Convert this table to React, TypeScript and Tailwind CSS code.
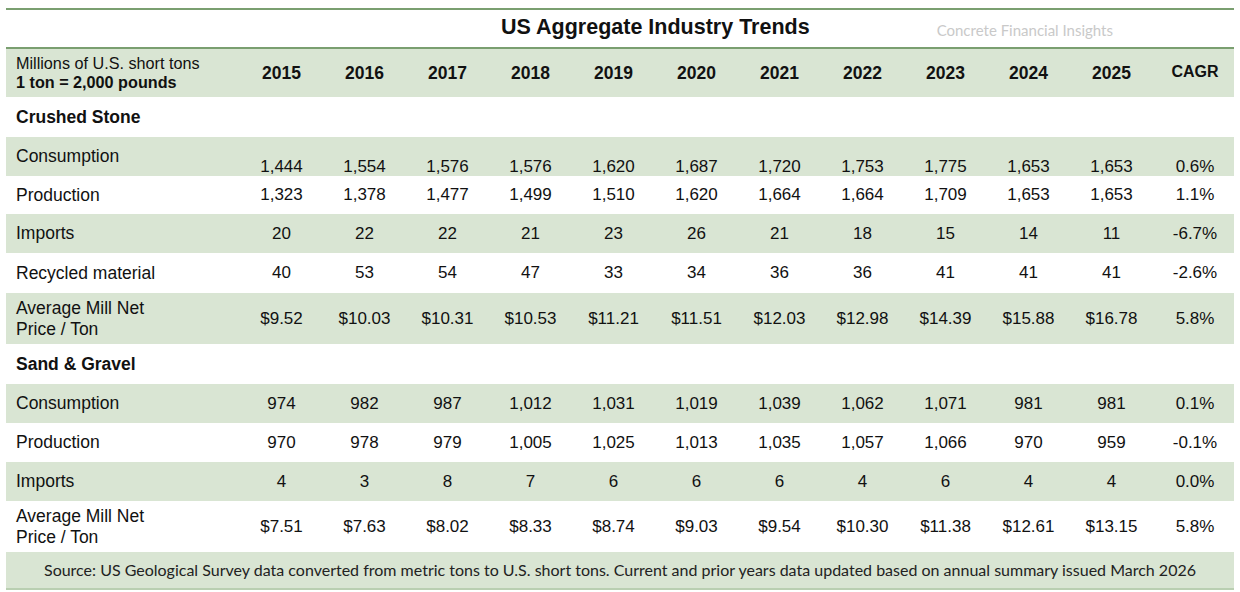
const years = ["2015", "2016", "2017", "2018", "2019", "2020", "2021", "2022", "2023", "2024", "2025"];

type Row = {
  label: string[];
  values: string[];
  green: boolean;
  h: string;
  offset?: boolean;
};

const crushed: Row[] = [
  { label: ["Consumption"], values: ["1,444", "1,554", "1,576", "1,576", "1,620", "1,687", "1,720", "1,753", "1,775", "1,653", "1,653", "0.6%"], green: true, h: "h-[39px]", offset: true },
  { label: ["Production"], values: ["1,323", "1,378", "1,477", "1,499", "1,510", "1,620", "1,664", "1,664", "1,709", "1,653", "1,653", "1.1%"], green: false, h: "h-[38px]" },
  { label: ["Imports"], values: ["20", "22", "22", "21", "23", "26", "21", "18", "15", "14", "11", "-6.7%"], green: true, h: "h-[39px]" },
  { label: ["Recycled material"], values: ["40", "53", "54", "47", "33", "34", "36", "36", "41", "41", "41", "-2.6%"], green: false, h: "h-[40px]" },
  { label: ["Average Mill Net", "Price / Ton"], values: ["$9.52", "$10.03", "$10.31", "$10.53", "$11.21", "$11.51", "$12.03", "$12.98", "$14.39", "$15.88", "$16.78", "5.8%"], green: true, h: "h-[51px]" },
];

const sand: Row[] = [
  { label: ["Consumption"], values: ["974", "982", "987", "1,012", "1,031", "1,019", "1,039", "1,062", "1,071", "981", "981", "0.1%"], green: true, h: "h-[39px]" },
  { label: ["Production"], values: ["970", "978", "979", "1,005", "1,025", "1,013", "1,035", "1,057", "1,066", "970", "959", "-0.1%"], green: false, h: "h-[39px]" },
  { label: ["Imports"], values: ["4", "3", "8", "7", "6", "6", "6", "4", "6", "4", "4", "0.0%"], green: true, h: "h-[39px]" },
  { label: ["Average Mill Net", "Price / Ton"], values: ["$7.51", "$7.63", "$8.02", "$8.33", "$8.74", "$9.03", "$9.54", "$10.30", "$11.38", "$12.61", "$13.15", "5.8%"], green: false, h: "h-[51px]" },
];

const grid = "grid grid-cols-[234px_repeat(11,83px)_84px]";

function DataRow({ row }: { row: Row }) {
  return (
    <div className={`${grid} ${row.h} leading-[20px] ${row.green ? "bg-[#d9e5d3]" : "bg-white"}`}>
      <div className={`flex flex-col pl-[10px] text-[17.5px] leading-[21px] ${row.offset ? "justify-start pt-[9px]" : "justify-center"}`}>
        {row.label.map((l) => (
          <span key={l}>{l}</span>
        ))}
      </div>
      {row.values.map((v, i) => (
        <div
          key={i}
          className={`flex justify-center ${row.offset ? "items-end pb-0 translate-y-[1px]" : "items-center"}`}
        >
          {v}
        </div>
      ))}
    </div>
  );
}

function Section({ title }: { title: string }) {
  return (
    <div className="h-[40px] flex items-center pl-[10px] font-bold text-[17.5px] bg-white">{title}</div>
  );
}

export default function App() {
  return (
    <div className="w-[1240px] h-[592px] bg-white pt-[8px] px-[6px] font-['Liberation_Sans',Arial,sans-serif] text-[17px] text-[#111]">
      <div className="border-t-2 border-[#7a9f70]" />
      {/* title */}
      <div className="h-[39px] flex items-center border-b-2 border-[#7a9f70]">
        <h1 className="ml-[495px] text-[21.5px] font-bold text-[#111] mt-[-2px]">US Aggregate Industry Trends</h1>
        <span className="ml-auto mr-[121px] mt-[4px] font-['Lato',sans-serif] text-[15px] text-[#c9c9c9]">
          Concrete Financial Insights
        </span>
      </div>

      {/* header */}
      <div className={`${grid} h-[48px] bg-[#d9e5d3]`}>
        <div className="flex flex-col justify-center pl-[10px] text-[16.2px] leading-[19px]">
          <span>Millions of U.S. short tons</span>
          <span className="font-bold">1 ton = 2,000 pounds</span>
        </div>
        {years.map((y) => (
          <div key={y} className="flex items-center justify-center font-bold text-[17.5px]">
            {y}
          </div>
        ))}
        <div className="flex items-center justify-center font-bold text-[16px] pb-[2px]">CAGR</div>
      </div>

      <Section title="Crushed Stone" />
      {crushed.map((r, i) => (
        <DataRow key={i} row={r} />
      ))}
      <Section title="Sand & Gravel" />
      {sand.map((r, i) => (
        <DataRow key={i} row={r} />
      ))}

      {/* source */}
      <div className="h-[38px] flex items-center justify-center bg-[#d9e5d3] border-b-2 border-[#b9cfb1] font-['Lato',sans-serif] text-[16px] text-[#222]">
        Source: US Geological Survey data converted from metric tons to U.S. short tons. Current and prior years data updated based on annual summary issued March 2026
      </div>
    </div>
  );
}
